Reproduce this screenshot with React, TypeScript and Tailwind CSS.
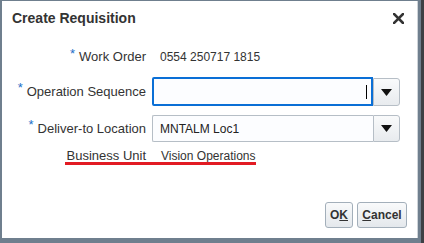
import React from "react";

function Star() {
  return (
    <span className="inline-block text-[#1b6fc8] text-[13px] leading-none mr-[4px] -translate-y-[4px]">*</span>
  );
}

function Tri() {
  return (
    <svg width="11" height="7" viewBox="0 0 11 7">
      <polygon points="0,0 11,0 5.5,7" fill="#111" />
    </svg>
  );
}

export default function App() {
  return (
    <div className="w-[424px] h-[243px] bg-[#3d4044] overflow-hidden font-['Liberation_Sans',Arial,sans-serif] text-[#333]">
      <div className="w-[421px] h-[243px] bg-white border-l-2 border-t border-r-[3px] border-b-[5px] border-[#6f7f8e] shadow-[inset_-1px_0_0_#cfd4d9] flex flex-col">
        {/* header */}
        <div className="h-[34px] flex items-center justify-between pl-[10px] pr-[14px]">
          <span className="text-[14px] font-bold text-[#333]">Create Requisition</span>
          <svg width="11" height="11" viewBox="0 0 11 11">
            <path d="M1 1 L10 10 M10 1 L1 10" stroke="#333" strokeWidth="2.6" strokeLinecap="square" />
          </svg>
        </div>

        {/* Work Order */}
        <div className="flex h-[20px] mt-[12px] items-center text-[13px]">
          <div className="w-[144px] flex justify-end items-center">
            <Star />
            <span>Work Order</span>
          </div>
          <div className="ml-[6px] pl-[8px] text-[12px]">0554 250717 1815</div>
        </div>

        {/* Operation Sequence */}
        <div className="flex h-[29px] mt-[10px] items-center text-[13px]">
          <div className="w-[144px] flex justify-end items-center">
            <Star />
            <span>Operation Sequence</span>
          </div>
          <div className="ml-[6px] flex h-full">
            <div className="w-[221px] h-full border-2 border-[#0a6fd6] rounded-l-[2px] bg-[#fcfdff] flex items-center justify-end pr-[4px]">
              <div className="w-px h-[14px] bg-black" />
            </div>
            <div className="w-[27px] h-[28px] mt-px border border-[#b6bec6] rounded-r-[3px] bg-gradient-to-b from-[#f9fafb] to-[#e8ebee] flex items-center justify-center">
              <Tri />
            </div>
          </div>
        </div>

        {/* Deliver-to Location */}
        <div className="flex h-[27px] mt-[9px] items-center text-[13px]">
          <div className="w-[144px] flex justify-end items-center">
            <Star />
            <span>Deliver-to Location</span>
          </div>
          <div className="ml-[6px] flex h-full">
            <div className="w-[221px] h-full border border-r-0 border-[#b6bec6] rounded-l-[2px] bg-[#fcfdff] flex items-center pl-[7px] text-[12px] text-[#222]">
              MNTALM Loc1
            </div>
            <div className="w-[27px] h-full border border-[#b6bec6] rounded-r-[3px] bg-gradient-to-b from-[#f9fafb] to-[#e8ebee] flex items-center justify-center">
              <Tri />
            </div>
          </div>
        </div>

        {/* Business Unit */}
        <div className="relative flex h-[18px] mt-[5px] items-center text-[13px]">
          <div className="w-[144px] flex justify-end items-center">
            <span>Business Unit</span>
          </div>
          <div className="ml-[6px] pl-[9px] text-[12px]">Vision Operations</div>
          <div className="absolute left-[63px] top-[15px] w-[191px] h-[3px] bg-[#e21b23]" />
        </div>

        <div className="flex-1" />

        {/* footer */}
        <div className="flex justify-end gap-[4px] pr-[11px] pb-[10px]">
          <div className="w-[28px] h-[26px] border border-[#a3afba] rounded-[3px] bg-gradient-to-b from-[#f9fafb] to-[#e4e8ec] flex items-center justify-center text-[12px] font-bold text-[#333]">
            O<span className="underline">K</span>
          </div>
          <div className="w-[50px] h-[26px] border border-[#a3afba] rounded-[3px] bg-gradient-to-b from-[#f9fafb] to-[#e4e8ec] flex items-center justify-center text-[12px] font-bold text-[#333]">
            <span className="underline">C</span>ancel
          </div>
        </div>
      </div>
    </div>
  );
}
